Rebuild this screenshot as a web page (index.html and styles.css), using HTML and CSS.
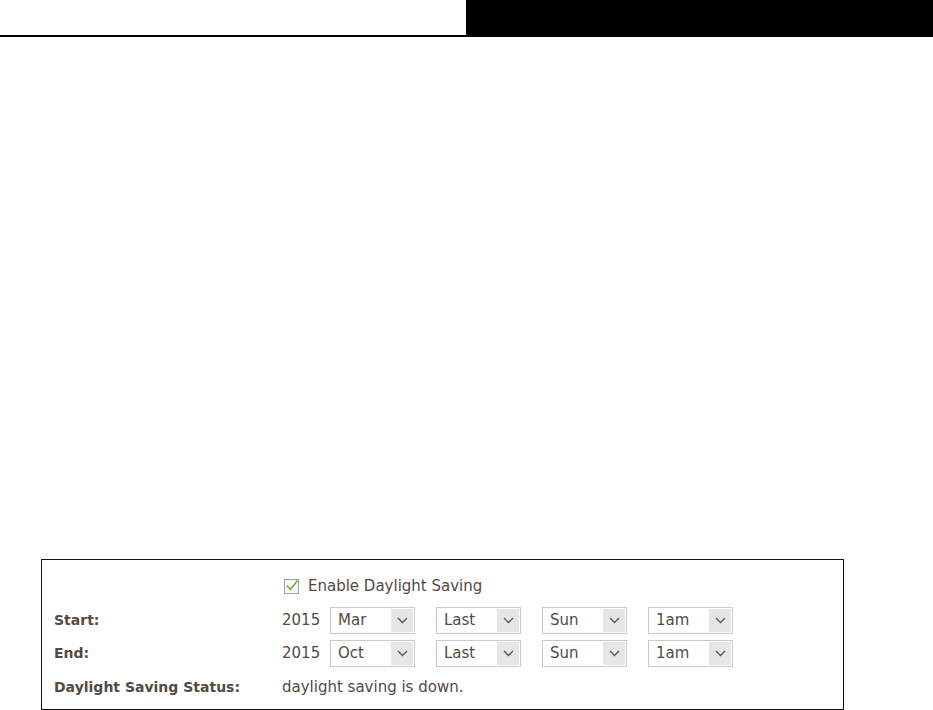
FILE: index.html
```html
<!DOCTYPE html>
<html lang="en">
<head>
    <meta charset="UTF-8">
    <meta name="viewport" content="width=device-width, initial-scale=1.0">
    <title>Daylight Saving</title>
    <link rel="stylesheet" href="styles.css">
</head>
<body>
    <div class="header">
        <div class="header-line"></div>
        <div class="header-bar"></div>
    </div>

    <div class="panel">
        <div class="label"></div>
        <div class="value">
            <span class="checkbox">
                <svg width="14" height="13" viewBox="0 0 14 13"><path d="M2 6.5 L5.5 10.5 L12.5 1.5" fill="none" stroke="#6cb33f" stroke-width="1.7"/></svg>
            </span>
            <span>Enable Daylight Saving</span>
        </div>

        <div class="label">Start:</div>
        <div class="value">
            <span class="year">2015</span>
            <div class="select"><span>Mar</span><span class="arrow"><svg width="11" height="7" viewBox="0 0 11 7"><path d="M1 1 L5.5 5.5 L10 1" fill="none" stroke="#555" stroke-width="1.3"/></svg></span></div>
            <div class="select"><span>Last</span><span class="arrow"><svg width="11" height="7" viewBox="0 0 11 7"><path d="M1 1 L5.5 5.5 L10 1" fill="none" stroke="#555" stroke-width="1.3"/></svg></span></div>
            <div class="select"><span>Sun</span><span class="arrow"><svg width="11" height="7" viewBox="0 0 11 7"><path d="M1 1 L5.5 5.5 L10 1" fill="none" stroke="#555" stroke-width="1.3"/></svg></span></div>
            <div class="select"><span>1am</span><span class="arrow"><svg width="11" height="7" viewBox="0 0 11 7"><path d="M1 1 L5.5 5.5 L10 1" fill="none" stroke="#555" stroke-width="1.3"/></svg></span></div>
        </div>

        <div class="label">End:</div>
        <div class="value">
            <span class="year">2015</span>
            <div class="select"><span>Oct</span><span class="arrow"><svg width="11" height="7" viewBox="0 0 11 7"><path d="M1 1 L5.5 5.5 L10 1" fill="none" stroke="#555" stroke-width="1.3"/></svg></span></div>
            <div class="select"><span>Last</span><span class="arrow"><svg width="11" height="7" viewBox="0 0 11 7"><path d="M1 1 L5.5 5.5 L10 1" fill="none" stroke="#555" stroke-width="1.3"/></svg></span></div>
            <div class="select"><span>Sun</span><span class="arrow"><svg width="11" height="7" viewBox="0 0 11 7"><path d="M1 1 L5.5 5.5 L10 1" fill="none" stroke="#555" stroke-width="1.3"/></svg></span></div>
            <div class="select"><span>1am</span><span class="arrow"><svg width="11" height="7" viewBox="0 0 11 7"><path d="M1 1 L5.5 5.5 L10 1" fill="none" stroke="#555" stroke-width="1.3"/></svg></span></div>
        </div>

        <div class="label">Daylight Saving Status:</div>
        <div class="value">daylight saving is down.</div>
    </div>
</body>
</html>
```

FILE: styles.css
```css
body {
    margin: 0;
    font-family: "DejaVu Sans", Verdana, sans-serif;
    font-size: 15px;
    color: #544a41;
    background: #fff;
}
.header {
    display: flex;
    height: 37px;
}
.header-line {
    width: 466px;
    border-bottom: 2px solid #000;
    box-sizing: border-box;
}
.header-bar {
    flex: 1;
    background: #000;
}
.panel {
    margin: 522px 0 0 41px;
    width: 803px;
    height: 151px;
    box-sizing: border-box;
    border: 1px solid #111;
    padding: 8px 0 0 12px;
    display: grid;
    grid-template-columns: 228px auto;
    grid-template-rows: 34px 34px 32px 36px;
}
.label {
    display: flex;
    align-items: center;
    font-weight: bold;
    font-size: 14px;
    padding-top: 1px;
}
.value {
    display: flex;
    align-items: center;
    padding-top: 2px;
}
.checkbox {
    position: relative;
    width: 13px;
    height: 13px;
    border: 1px solid #a0a0a0;
    margin: 0 9px 0 2px;
    background: #f8f8f8;
}
.checkbox svg {
    position: absolute;
    left: 0;
    top: -1px;
}
.year {
    width: 48px;
}
.select {
    width: 85px;
    height: 27px;
    box-sizing: border-box;
    border: 1px solid #c9c9c9;
    display: flex;
    align-items: center;
    justify-content: space-between;
    margin-right: 21px;
    padding: 1px 1px 1px 7px;
}
.arrow {
    width: 22px;
    height: 100%;
    background: #e6e6e6;
    display: flex;
    align-items: center;
    justify-content: center;
}
```
